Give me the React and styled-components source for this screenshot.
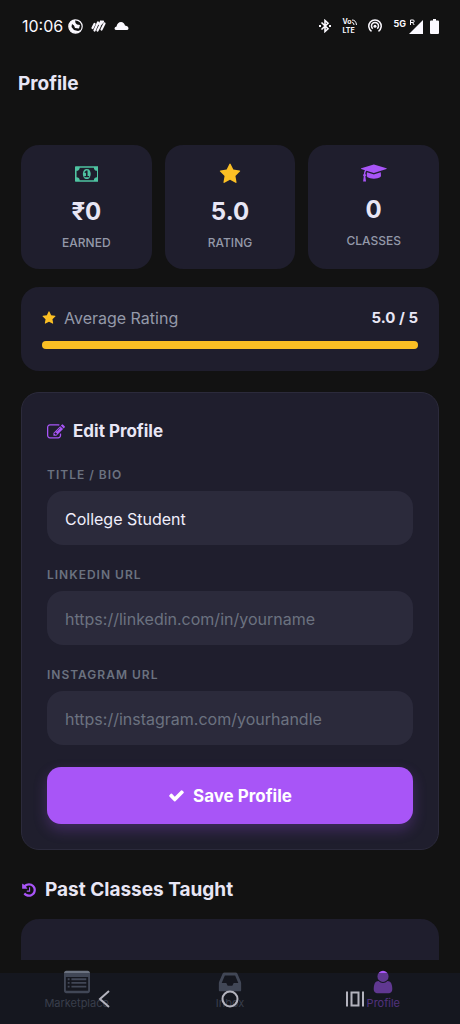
import React, { useState } from 'react'
import styled, { createGlobalStyle } from 'styled-components'

const GlobalStyle = createGlobalStyle`
    * {
        box-sizing: border-box;
    }

    body {
        margin: 0;
        background: #121212;
        color: #e8e6f5;
        font-family: Inter, 'Noto Sans', sans-serif;
    }

    button, input {
        font-family: inherit;
    }
`

/* icon outlines, drawn on a 1792 unit high grid */
const icons = {
    money: { width: 1920, path: 'M768 1152h384v-96h-128v-448h-114l-148 137 77 80q42-37 55-57h2v288h-128v96zm512-256q0 70-21 142t-59.5 134-101.5 101-138 39-138-39-101.5-101-59.5-134-21-142 21-142 59.5-134 101.5-101 138-39 138 39 101.5 101 59.5 134 21 142zm512 256v-512q-106 0-181-75t-75-181h-1152q0 106-75 181t-181 75v512q106 0 181 75t75 181h1152q0-106 75-181t181-75zm128-832v1152q0 26-19 45t-45 19h-1792q-26 0-45-19t-19-45v-1152q0-26 19-45t45-19h1792q26 0 45 19t19 45z' },
    star: { width: 1792, path: 'M1728 647q0 22-26 48l-363 354 86 500q1 7 1 20 0 21-10.5 35.5t-30.5 14.5q-19 0-40-12l-449-236-449 236q-22 12-40 12-21 0-31.5-14.5t-10.5-35.5q0-6 2-20l86-500-364-354q-25-27-25-48 0-37 56-46l502-73 225-455q19-41 49-41t49 41l225 455 502 73q56 9 56 46z' },
    cap: { width: 2304, path: 'M1774 836l18 316q4 69-82 128t-235 93.5-323 34.5-323-34.5-235-93.5-82-128l18-316 574 181q22 7 48 7t48-7zm530-324q0 23-22 31l-1120 352q-4 1-10 1t-10-1l-652-206q-43 34-71 111.5t-34 178.5q63 36 63 109 0 69-58 107l58 433q2 14-8 25-9 11-24 11h-192q-15 0-24-11-10-11-8-25l58-433q-58-38-58-107 0-73 65-111 11-207 98-330l-333-104q-22-8-22-31t22-31l1120-352q4-1 10-1t10 1l1120 352q22 8 22 31z' },
    edit: { width: 1792, path: 'M888 1184l116-116-152-152-116 116v56h96v96h56zm440-720q-16-16-33 1l-350 350q-17 17-1 33t33-1l350-350q17-17 1-33zm80 594v190q0 119-84.5 203.5t-203.5 84.5h-832q-119 0-203.5-84.5t-84.5-203.5v-832q0-119 84.5-203.5t203.5-84.5h832q63 0 117 25 15 7 18 23 3 17-9 29l-49 49q-14 14-32 8-23-6-45-6h-832q-66 0-113 47t-47 113v832q0 66 47 113t113 47h832q66 0 113-47t47-113v-126q0-13 9-22l64-64q15-15 35-7t20 29zm-96-738l288 288-672 672h-288v-288zm444 132l-92 92-288-288 92-92q28-28 68-28t68 28l152 152q28 28 28 68t-28 68z' },
    check: { width: 1792, path: 'M1671 566q0 40-28 68l-724 724-136 136q-28 28-68 28t-68-28l-136-136-362-362q-28-28-28-68t28-68l136-136q28-28 68-28t68 28l294 295 656-657q28-28 68-28t68 28l136 136q28 28 28 68z' },
    history: { width: 1792, path: 'M1664 896q0 156-61 298t-164 245-245 164-298 61q-172 0-327-72.5t-264-204.5q-7-10-6.5-22.5t8.5-20.5l137-138q10-9 25-9 16 2 23 12 73 95 179 147t225 52q104 0 198.5-40.5t163.5-109.5 109.5-163.5 40.5-198.5-40.5-198.5-109.5-163.5-163.5-109.5-198.5-40.5q-98 0-188 35.5t-160 101.5l137 138q31 30 14 69-17 40-59 40h-448q-26 0-45-19t-19-45v-448q0-42 40-59 39-17 69 14l130 129q107-101 244.5-156.5t284.5-55.5q156 0 298 61t245 164 164 245 61 298zm-640-288v448q0 14-9 23t-23 9h-320q-14 0-23-9t-9-23v-64q0-14 9-23t23-9h224v-352q0-14 9-23t23-9h64q14 0 23 9t9 23z' },
    list: { width: 1792, path: 'M160 128h1472q66 0 113 47t47 113v1216q0 66-47 113t-113 47h-1472q-66 0-113-47t-47-113v-1216q0-66 47-113t113-47zM128 544v928q0 32 32 32h1472q32 0 32-32v-928zM256 640h128v128h-128zM512 640h1024v128h-1024zM256 896h128v128h-128zM512 896h1024v128h-1024zM256 1152h128v128h-128zM512 1152h1024v128h-1024z' },
    inbox: { width: 1792, path: 'M1151 960h316q-1-3-2.5-8t-2.5-8l-212-496h-708l-212 496q-1 2-2.5 8t-2.5 8h316l95 192h320zm513 30v482q0 26-19 45t-45 19h-1408q-26 0-45-19t-19-45v-482q0-62 25-123l238-552q10-25 36.5-42t52.5-17h832q26 0 52.5 17t36.5 42l238 552q25 61 25 123z' },
    user: { width: 1792, path: 'M1536 1399q0 109-62.5 187t-150.5 78h-854q-88 0-150.5-78t-62.5-187q0-85 8.5-160.5t31.5-152 58.5-131 94-89 134.5-34.5q131 128 313 128t313-128q76 0 134.5 34.5t94 89 58.5 131 31.5 152 8.5 160.5zm-256-887q0 159-112.5 271.5t-271.5 112.5-271.5-112.5-112.5-271.5 112.5-271.5 271.5-112.5 271.5 112.5 112.5 271.5z' },
}

const IconSvg = styled.svg`
    display: block;
    flex: none;
    height: ${(props) => props.$size}px;
    fill: ${(props) => props.$color || 'currentColor'};
`

const Icon = ({ name, size, color }) => (
    <IconSvg $size={size} $color={color} viewBox={`0 0 ${icons[name].width} 1792`} fillRule="evenodd" aria-hidden="true">
        <path d={icons[name].path} />
    </IconSvg>
)

const Screen = styled.div`
    position: relative;
    display: flex;
    flex-direction: column;
    height: 100vh;
    overflow: hidden;
`

const StatusBar = styled.div`
    display: flex;
    justify-content: space-between;
    align-items: center;
    flex: none;
    height: 52px;
    padding: 0 21px 0 22px;
    color: #fbf9ff;
`

const StatusGroup = styled.div`
    display: flex;
    align-items: center;
    gap: ${(props) => props.$gap}px;
`

const Clock = styled.time`
    font-size: 16px;
    line-height: 20px;
`

const StatusIcon = styled.svg`
    display: block;
    flex: none;
    fill: none;
    stroke: currentColor;
`

const Volte = styled.span`
    display: grid;
    font-size: 7px;
    font-weight: 700;
    line-height: 9px;
`

const VolteTop = styled.span`
    display: flex;
    align-items: center;
    gap: 1px;
`

const Network = styled.span`
    display: flex;
    align-items: flex-start;
    gap: 3px;
    font-size: 9px;
    font-weight: 700;
    line-height: 10px;
`

const TitleBar = styled.header`
    flex: none;
    height: 62px;
    padding: 18px;
`

const PageTitle = styled.h1`
    margin: 0;
    font-size: 19px;
    font-weight: 700;
    line-height: 28px;
`

const Content = styled.main`
    flex: 1;
    min-height: 0;
    overflow: hidden;
    padding: 31px 21px 0;
`

const Card = styled.section`
    background: #1f1e2d;
    border-radius: 18px;
`

const Stats = styled.div`
    display: grid;
    grid-template-columns: repeat(3, 1fr);
    gap: 13px;
`

const Stat = styled(Card)`
    display: flex;
    flex-direction: column;
    align-items: center;
    height: 124px;
    padding-top: 18px;
`

const StatValue = styled.strong`
    margin-top: 11px;
    font-size: 24px;
    font-weight: 700;
    line-height: 32px;
`

const StatLabel = styled.span`
    margin-top: 6px;
    color: #9499a9;
    font-size: 12px;
    font-weight: 500;
    line-height: 18px;
`

const RatingCard = styled(Card)`
    height: 84px;
    margin-top: 18px;
    padding: 21px;
`

const RatingRow = styled.div`
    display: flex;
    align-items: center;
    gap: 8px;
    line-height: 20px;
`

const RatingLabel = styled.span`
    flex: 1;
    color: #9499a9;
    font-size: 16px;
`

const RatingValue = styled.strong`
    font-size: 15px;
    font-weight: 700;
`

const Track = styled.div`
    height: 8px;
    margin-top: 13px;
    border-radius: 4px;
    background: #2b2a3b;
`

const Fill = styled.div`
    height: 100%;
    border-radius: 4px;
    background: #fbbf24;
`

const FormCard = styled(Card)`
    margin-top: 21px;
    padding: 25px;
    border: 1px solid #2b2a3b;
`

const SectionTitle = styled.h2`
    display: flex;
    align-items: center;
    gap: 8px;
    margin: 0;
    font-size: ${(props) => props.$size || 17}px;
    font-weight: 700;
    line-height: 27px;
`

const Field = styled.div`
    margin-top: 21px;
`

const FieldLabel = styled.label`
    display: block;
    margin-bottom: 7px;
    color: #6b7280;
    font-size: 12px;
    font-weight: 600;
    letter-spacing: 1px;
    line-height: 18px;
`

const TextInput = styled.input`
    display: block;
    width: 100%;
    height: 54px;
    padding: 2px 18px 0;
    border: 0;
    border-radius: 16px;
    outline: 0;
    background: #2b2a3b;
    color: #f0eefb;
    font-size: 16px;

    &::placeholder {
        color: #6b7280;
        opacity: 1;
    }
`

const SaveButton = styled.button`
    display: flex;
    justify-content: center;
    align-items: center;
    gap: 8px;
    width: 100%;
    height: 57px;
    margin-top: 22px;
    border: 0;
    border-radius: 14px;
    background: #a855f7;
    box-shadow: 0 6px 14px rgba(168, 85, 247, 0.25);
    color: #fff;
    font-size: 17px;
    font-weight: 700;
`

const History = styled.section`
    margin-top: 26px;
`

const HistoryCard = styled(Card)`
    height: 120px;
    margin-top: 16px;
`

const TabBar = styled.nav`
    display: grid;
    grid-template-columns: repeat(3, 1fr);
    flex: none;
    height: 64px;
    padding-top: 9px;
`

const Tab = styled.a`
    display: flex;
    flex-direction: column;
    align-items: center;
    color: ${(props) => (props.$active ? '#a855f7' : '#6b7280')};
    font-size: 11px;
    line-height: 17px;
    text-decoration: none;
`

const TabText = styled.span`
    opacity: 0.8;
`

const SystemBar = styled.div`
    position: absolute;
    right: 0;
    bottom: 0;
    left: 0;
    display: flex;
    justify-content: center;
    gap: 101px;
    height: 51px;
    background: rgba(24, 28, 44, 0.5);
`

const SystemButton = styled.button`
    width: 24px;
    height: 51px;
    padding: 0;
    border: 0;
    background: none;
    color: #b3b3bd;
`

const stats = [
    { icon: 'money', size: 22, color: '#4fc3a1', value: '₹0', label: 'EARNED' },
    { icon: 'star', size: 22, color: '#fbbf24', value: '5.0', label: 'RATING' },
    { icon: 'cap', size: 20, color: '#a855f7', value: '0', label: 'CLASSES' },
]

const fields = [
    { id: 'bio', label: 'TITLE / BIO', placeholder: '' },
    { id: 'linkedin', label: 'LINKEDIN URL', placeholder: 'https://linkedin.com/in/yourname' },
    { id: 'instagram', label: 'INSTAGRAM URL', placeholder: 'https://instagram.com/yourhandle' },
]

const tabs = [
    { icon: 'list', size: 26, label: 'Marketplace' },
    { icon: 'inbox', size: 26, label: 'Inbox' },
    { icon: 'user', size: 26, label: 'Profile', active: true },
]

const PhoneStatus = () => (
    <StatusBar>
        <StatusGroup $gap={8}>
            <StatusGroup $gap={5}>
                <Clock>10:06</Clock>
                <StatusIcon width="15" height="15" viewBox="0 0 15 15">
                    <circle cx="7.5" cy="7.5" r="6.7" strokeWidth="1.2" />
                    <path d="M7 .8C3 1 1 4 1 7.500C1 11 4 14 7.500 14C10 14 12 13 13 11L10 12L6 11L3.500 8L4 5L6 6.500L7 9L11 9.500L12 6L9 5.500L7.500 4Z" fill="currentColor" stroke="none" />
                </StatusIcon>
            </StatusGroup>
            <StatusIcon width="15" height="14" viewBox="0 0 15 14" strokeLinecap="round">
                <path d="M1.500 9L3.500 5M3.500 11.500L7 3.500M6.500 11.500L8.800 7M8.500 5.500L10 2.500M10.500 10.500L13.500 4.500M9 6L12 2.500" strokeWidth="2.200" />
            </StatusIcon>
            <StatusIcon width="15" height="10" viewBox="0 0 15 10">
                <path d="M2.500 9Q.5 9 .5 7.500Q.5 6 2.500 5.500Q3.500 1 7 1Q10 1 11 4.500Q14.500 5 14.500 7.500Q14.500 9 12.500 9Z" fill="currentColor" stroke="none" />
            </StatusIcon>
        </StatusGroup>
        <StatusGroup $gap={11}>
            <StatusIcon width="12" height="14" viewBox="0 0 12 14" strokeWidth="1.600">
                <path d="M2.500 3.500L9 9.800L6 12.500V1.500L9 4.200L2.500 10.500" />
                <path d="M0 7H2M10 7H12" strokeWidth="1.800" />
            </StatusIcon>
            <Volte>
                <VolteTop>
                    Vo
                    <StatusIcon width="5" height="6" viewBox="0 0 5 6">
                        <path d="M0 1Q4 1 4.500 6M0 3.500Q2 3.500 2 6" />
                    </StatusIcon>
                </VolteTop>
                <span>LTE</span>
            </Volte>
            <StatusIcon width="14" height="14" viewBox="0 0 14 14" strokeWidth="1.500">
                <path d="M3.500 12.300A6.200 6.200 0 1 1 10.500 12.300M4.800 9.700A3.500 3.500 0 1 1 9.200 9.700" />
                <circle cx="7" cy="7.300" r="1.500" fill="currentColor" stroke="none" />
            </StatusIcon>
            <StatusGroup $gap={7}>
                <Network>
                    5G
                    <StatusIcon width="14" height="15" viewBox="0 0 14 15">
                        <path d="M14 1V15H0Z" fill="currentColor" stroke="none" />
                        <path d="M1.500 6V1H4Q5.200 1 5.200 2.200Q5.200 3.500 4 3.500H1.500M3.500 3.500L5.200 6" strokeWidth="1" />
                    </StatusIcon>
                </Network>
                <StatusIcon width="9" height="15" viewBox="0 0 9 15">
                    <path d="M3 0H6V1.500H8Q9 1.500 9 2.500V14Q9 15 8 15H1Q0 15 0 14V2.500Q0 1.500 1 1.500H3Z" fill="currentColor" stroke="none" />
                </StatusIcon>
            </StatusGroup>
        </StatusGroup>
    </StatusBar>
)

export default function App() {
    const [profile, setProfile] = useState({ bio: 'College Student', linkedin: '', instagram: '' })
    const rating = 5

    return (
        <Screen>
            <GlobalStyle />
            <PhoneStatus />
            <TitleBar>
                <PageTitle>Profile</PageTitle>
            </TitleBar>
            <Content>
                <Stats>
                    {stats.map((stat) => (
                        <Stat key={stat.label}>
                            <Icon name={stat.icon} size={stat.size} color={stat.color} />
                            <StatValue>{stat.value}</StatValue>
                            <StatLabel>{stat.label}</StatLabel>
                        </Stat>
                    ))}
                </Stats>
                <RatingCard>
                    <RatingRow>
                        <Icon name="star" size={14} color="#fbbf24" />
                        <RatingLabel>Average Rating</RatingLabel>
                        <RatingValue>5.0 / 5</RatingValue>
                    </RatingRow>
                    <Track>
                        <Fill style={{ width: `${(rating / 5) * 100}%` }} />
                    </Track>
                </RatingCard>
                <FormCard as="form" onSubmit={(e) => e.preventDefault()}>
                    <SectionTitle>
                        <Icon name="edit" size={18} color="#a855f7" />
                        Edit Profile
                    </SectionTitle>
                    {fields.map((field) => (
                        <Field key={field.id}>
                            <FieldLabel htmlFor={field.id}>{field.label}</FieldLabel>
                            <TextInput
                                id={field.id}
                                placeholder={field.placeholder}
                                value={profile[field.id]}
                                onChange={(e) => setProfile({ ...profile, [field.id]: e.target.value })}
                            />
                        </Field>
                    ))}
                    <SaveButton type="submit">
                        <Icon name="check" size={17} />
                        Save Profile
                    </SaveButton>
                </FormCard>
                <History>
                    <SectionTitle $size={19}>
                        <Icon name="history" size={16} color="#a855f7" />
                        Past Classes Taught
                    </SectionTitle>
                    <HistoryCard as="div" />
                </History>
            </Content>
            <TabBar>
                {tabs.map((tab) => (
                    <Tab key={tab.label} href="#" $active={tab.active}>
                        <Icon name={tab.icon} size={tab.size} />
                        <TabText>{tab.label}</TabText>
                    </Tab>
                ))}
            </TabBar>
            <SystemBar>
                <SystemButton aria-label="Back">
                    <StatusIcon width="24" height="24" viewBox="0 0 24 24" strokeWidth="2">
                        <path d="M16 4L7 12L16 20" />
                    </StatusIcon>
                </SystemButton>
                <SystemButton aria-label="Home">
                    <StatusIcon width="24" height="24" viewBox="0 0 24 24" strokeWidth="2">
                        <circle cx="12" cy="12" r="7.500" />
                    </StatusIcon>
                </SystemButton>
                <SystemButton aria-label="Recent apps">
                    <StatusIcon width="24" height="24" viewBox="0 0 24 24" strokeWidth="2">
                        <path d="M4 4.500V19.500M20 4.500V19.500M8.500 5.500H15.500V18.500H8.500Z" />
                    </StatusIcon>
                </SystemButton>
            </SystemBar>
        </Screen>
    )
}
